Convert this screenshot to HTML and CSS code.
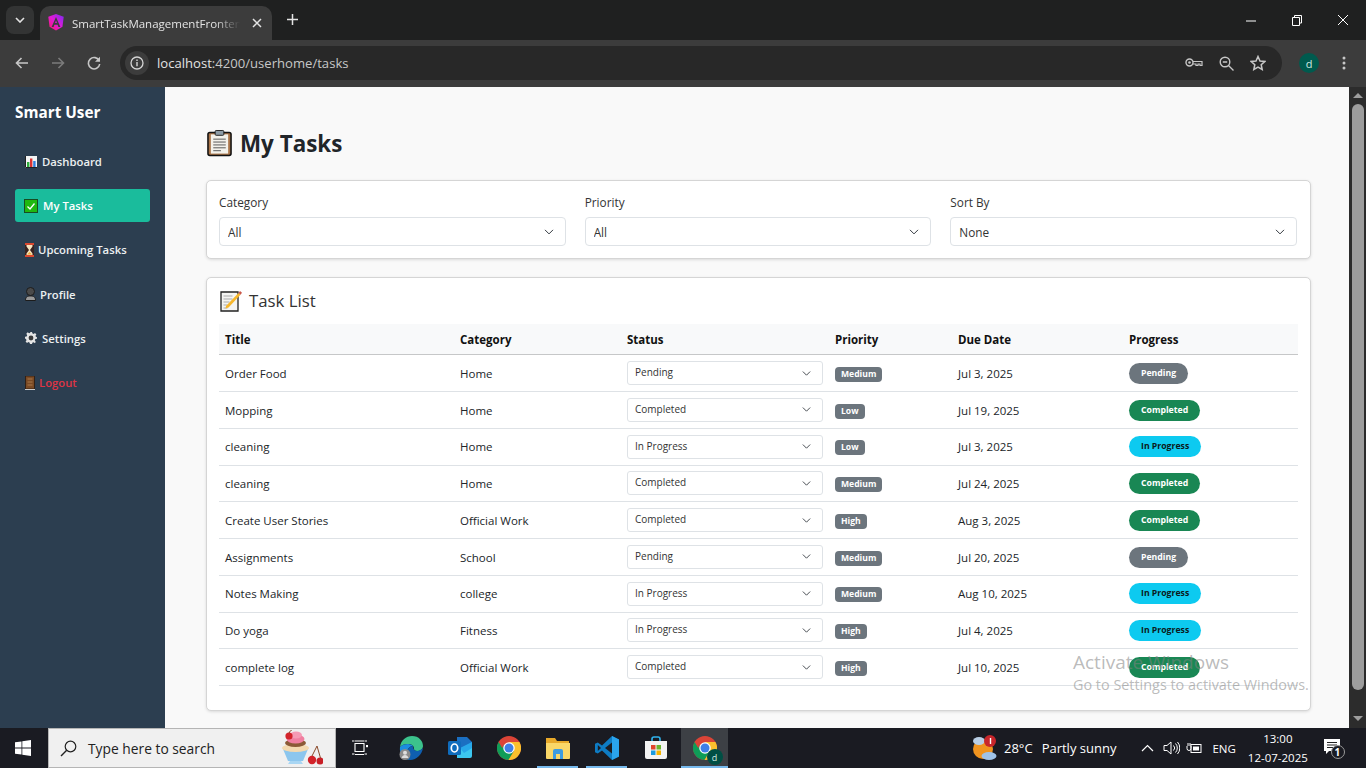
FILE: index.html
```html
<!DOCTYPE html>
<html lang="en">
<head>
<meta charset="utf-8">
<title>SmartTaskManagementFrontend</title>
<link rel="stylesheet" href="styles.css">
</head>
<body>
<svg class="defs" width="0" height="0" aria-hidden="true">
  <defs>
    <linearGradient id="ng" x1="0" y1="1" x2="1" y2="0">
      <stop offset="0" stop-color="#ff1a5e"/><stop offset=".5" stop-color="#e01ad8"/><stop offset="1" stop-color="#7a2cf0"/>
    </linearGradient>
  </defs>
  <symbol id="chrome" viewBox="0 0 48 48">
    <circle cx="24" cy="24" r="24" fill="#db4437"/>
    <path d="M24 24 3.2 36A24 24 0 0 1 3.2 12L14 30z" fill="#0f9d58"/>
    <path d="M3.2 36 14 18l10 6 10 6-11 18A24 24 0 0 1 3.2 36z" fill="#0f9d58"/>
    <path d="M24 12h20.8A24 24 0 0 1 23 48l11-18z" fill="#fbc02d"/>
    <circle cx="24" cy="24" r="11.5" fill="#fff"/>
    <circle cx="24" cy="24" r="9" fill="#3f7fe8"/>
  </symbol>
</svg>

<header class="tabstrip">
  <button class="tab-menu" aria-label="Search tabs">
    <svg width="10" height="6" viewBox="0 0 10 6"><path d="M1 1l4 4 4-4" fill="none" stroke="#e3e3e3" stroke-width="1.6"/></svg>
  </button>
  <div class="tab">
    <svg class="favicon" width="16" height="17" viewBox="0 0 16 17">
      <path d="M8 0 15.700 2.800l-1.200 10L8 16.600 1.500 12.800.3 2.800z" fill="url(#ng)"/>
      <path d="M8 3 3.600 13h2l.8-2.200h3.200l.8 2.200h2zm-1 6L8 6.400 9 9z" fill="#3c3c3c"/>
    </svg>
    <span class="tab-title">SmartTaskManagementFrontend</span>
    <svg class="tab-close" width="10" height="10" viewBox="0 0 10 10"><path d="M1 1l8 8M9 1 1 9" stroke="#e3e3e3" stroke-width="1.5"/></svg>
  </div>
  <svg class="new-tab" width="13" height="13" viewBox="0 0 13 13"><path d="M6.500 1v11M1 6.500h11" stroke="#e3e3e3" stroke-width="1.5"/></svg>
  <div class="win-controls">
    <svg width="46" height="12" viewBox="0 0 46 12"><path d="M18 7h10" stroke="#fff" stroke-width="1"/></svg>
    <svg width="46" height="12" viewBox="0 0 46 12"><path d="M18.500 3.500h7v8h-7zM20.500 3.500v-2h7v7.500h-2" fill="none" stroke="#fff"/></svg>
    <svg width="46" height="12" viewBox="0 0 46 12"><path d="M18 1l10 10M28 1 18 11" stroke="#fff"/></svg>
  </div>
</header>

<nav class="toolbar">
  <svg class="tool" width="16" height="16" viewBox="0 0 16 16"><path d="M14 8H3M7.500 3 2.500 8l5 5" fill="none" stroke="#c7c7c7" stroke-width="1.600"/></svg>
  <svg class="tool" width="16" height="16" viewBox="0 0 16 16"><path d="M2 8h11M8.500 3l5 5-5 5" fill="none" stroke="#7b7b7b" stroke-width="1.600"/></svg>
  <svg class="tool tool-last" width="16" height="16" viewBox="0 0 16 16"><path d="M13.300 6A5.700 5.700 0 1 0 13.700 9" fill="none" stroke="#c7c7c7" stroke-width="1.600"/><path d="M14 1.800v5H9z" fill="#c7c7c7"/></svg>
  <div class="omnibox">
    <span class="site-info">
      <svg width="14" height="14" viewBox="0 0 14 14"><circle cx="7" cy="7" r="6" fill="none" stroke="#d5d5d5" stroke-width="1.300"/><path d="M7 6v4.200M7 3.500v1.400" stroke="#d5d5d5" stroke-width="1.400"/></svg>
    </span>
    <span class="url"><span class="url-host">localhost</span>:4200/userhome/tasks</span>
    <span class="omni-icons">
      <svg width="18" height="10" viewBox="0 0 18 10"><circle cx="4.500" cy="4.500" r="3.500" fill="none" stroke="#c7c7c7" stroke-width="1.400"/><circle cx="4.500" cy="4.500" r="1.300" fill="#c7c7c7"/><path d="M8 3.500h9v4h-2v-1.500h-2v1.500h-2v-1.500h-3" fill="none" stroke="#c7c7c7" stroke-width="1.200"/></svg>
      <svg width="15" height="15" viewBox="0 0 15 15"><circle cx="6" cy="6" r="4.800" fill="none" stroke="#c7c7c7" stroke-width="1.400"/><path d="M3.800 6h4.400M9.500 9.500l5 5" stroke="#c7c7c7" stroke-width="1.400"/></svg>
      <svg width="16" height="16" viewBox="0 0 16 16"><path d="M8 1.500l2 4.500 4.800.5-3.600 3.200 1 4.800L8 12.100l-4.200 2.400 1-4.800L1.200 6.500 6 6z" fill="none" stroke="#c7c7c7" stroke-width="1.500"/></svg>
    </span>
  </div>
  <span class="avatar">d</span>
  <svg class="kebab" width="4" height="14" viewBox="0 0 4 14"><circle cx="2" cy="2" r="1.500" fill="#c7c7c7"/><circle cx="2" cy="7" r="1.500" fill="#c7c7c7"/><circle cx="2" cy="12" r="1.500" fill="#c7c7c7"/></svg>
</nav>

<div class="viewport">
  <aside class="sidebar">
    <h2 class="brand">Smart User</h2>
    <ul class="menu">
      <li><a class="menu-link" href="#">
        <svg class="emo" width="12" height="12" viewBox="0 0 12 12"><rect width="12" height="12" fill="#f4f4f4"/><path d="M.5 0v11.500H12" fill="none" stroke="#222"/><rect x="2" y="6" width="2.400" height="5" fill="#2fae3c"/><rect x="5" y="2.500" width="2.400" height="8.500" fill="#d33"/><rect x="8.200" y="5" width="2.400" height="6" fill="#2f7fe0"/></svg>
        Dashboard</a></li>
      <li><a class="menu-link active" href="#">
        <svg class="emo emo-check" width="14" height="14" viewBox="0 0 14 14"><rect x=".5" y=".5" width="13" height="13" fill="#1fb80f" stroke="#174d22"/><path d="M3.500 7.500l2.500 2.500 4.500-5.500" fill="none" stroke="#fff" stroke-width="1.300"/></svg>
        My Tasks</a></li>
      <li><a class="menu-link" href="#">
        <svg class="emo emo-hour" width="9" height="14" viewBox="0 0 9 14"><rect width="9" height="14" fill="#3a2320"/><rect width="9" height="2" fill="#d9482f"/><rect y="12" width="9" height="2" fill="#d9482f"/><path d="M1.500 2h6v1.500L5 7l2.500 3.500V12h-6v-1.500L4 7 1.500 3.500z" fill="#f5e4c0"/><path d="M2 11.500h5L4.500 9z" fill="#efab3b"/></svg>
        Upcoming Tasks</a></li>
      <li><a class="menu-link" href="#">
        <svg class="emo emo-person" width="11" height="14" viewBox="0 0 11 14"><circle cx="5.500" cy="4.500" r="4" fill="#4a4a4a" stroke="#1c1c1c"/><path d="M.5 13.500c0-4 2-4.500 5-4.500s5 .5 5 4.500z" fill="#9a9a9a" stroke="#1c1c1c"/></svg>
        Profile</a></li>
      <li><a class="menu-link" href="#">
        <svg class="emo" width="12" height="12" viewBox="0 0 12 12"><path d="M5 0h2l.3 1.600 1.300.6L10 1.300l1.400 1.400-.9 1.400.6 1.300L12 5v2l-1.600.3-.6 1.300.9 1.400L10 11.400l-1.400-.9-1.300.6L7 12.500H5l-.3-1.600-1.300-.6-1.400.9L.6 9.800l.9-1.400-.6-1.300L0 7V5l1.600-.3.6-1.300-.9-1.400L2.700.6l1.400.9 1.300-.6z" transform="translate(0 -.25)" fill="#e4e4e4"/><circle cx="6" cy="6" r="2.400" fill="#3a3a3a"/></svg>
        Settings</a></li>
      <li><a class="menu-link logout" href="#">
        <svg class="emo emo-door" width="10" height="14" viewBox="0 0 10 14"><rect x=".5" width="9" height="13" fill="#7a4a25" stroke="#2a1a10" stroke-width=".8"/><path d="M2.500 3h5M2.500 6h5M2.500 9h5" stroke="#a9784a"/><rect y="13" width="10" height="1" fill="#ccc"/></svg>
        Logout</a></li>
    </ul>
  </aside>

  <main class="content">
    <h1 class="page-title">
      <svg class="title-icon" width="25" height="28" viewBox="0 0 26 28"><rect x="1" y="3" width="24" height="24" rx="2" fill="#a9754a" stroke="#111" stroke-width="1.600"/><rect x="4" y="5" width="18" height="20" fill="#f3f1ea"/><rect x="8.500" y="1" width="9" height="5" rx="1" fill="#8d9ca6" stroke="#222"/><path d="M6.500 10h13M6.500 13h13M6.500 16h13M6.500 19h13M6.500 22h8" stroke="#555" stroke-width="1"/></svg>
      My Tasks
    </h1>

    <section class="card filters">
      <label class="field"><span class="field-label">Category</span>
        <select class="select"><option>All</option></select></label>
      <label class="field"><span class="field-label">Priority</span>
        <select class="select"><option>All</option></select></label>
      <label class="field"><span class="field-label">Sort By</span>
        <select class="select"><option>None</option></select></label>
    </section>

    <section class="card tasks">
      <h2 class="card-title">
        <svg class="card-icon" width="22" height="22" viewBox="0 0 22 22"><path d="M1 2h13l4 0v19H1z" fill="#f4f4f2" stroke="#222" stroke-width="1.300"/><path d="M3.500 6h9M3.500 9h9M3.500 12h6M3.500 15h4M3.500 18h4" stroke="#aaa"/><path d="M6 16 18.500 3l2 1.800L8.500 17.500 5.500 18.500z" fill="#f7b72c"/><path d="M18.500 3l1.500-2 2 1.800-1.500 2z" fill="#c9574a"/></svg>
        Task List
      </h2>
      <table class="task-table">
        <colgroup>
          <col class="c-title"><col class="c-cat"><col class="c-status"><col class="c-prio"><col class="c-due"><col class="c-prog">
        </colgroup>
        <thead>
          <tr><th>Title</th><th>Category</th><th>Status</th><th>Priority</th><th>Due Date</th><th>Progress</th></tr>
        </thead>
        <tbody>
          <tr><td>Order Food</td><td>Home</td><td><select class="select select-sm"><option>Pending</option></select></td><td><span class="badge">Medium</span></td><td>Jul 3, 2025</td><td><span class="pill pending">Pending</span></td></tr>
          <tr><td>Mopping</td><td>Home</td><td><select class="select select-sm"><option>Completed</option></select></td><td><span class="badge">Low</span></td><td>Jul 19, 2025</td><td><span class="pill done">Completed</span></td></tr>
          <tr><td>cleaning</td><td>Home</td><td><select class="select select-sm"><option>In Progress</option></select></td><td><span class="badge">Low</span></td><td>Jul 3, 2025</td><td><span class="pill doing">In Progress</span></td></tr>
          <tr><td>cleaning</td><td>Home</td><td><select class="select select-sm"><option>Completed</option></select></td><td><span class="badge">Medium</span></td><td>Jul 24, 2025</td><td><span class="pill done">Completed</span></td></tr>
          <tr><td>Create User Stories</td><td>Official Work</td><td><select class="select select-sm"><option>Completed</option></select></td><td><span class="badge">High</span></td><td>Aug 3, 2025</td><td><span class="pill done">Completed</span></td></tr>
          <tr><td>Assignments</td><td>School</td><td><select class="select select-sm"><option>Pending</option></select></td><td><span class="badge">Medium</span></td><td>Jul 20, 2025</td><td><span class="pill pending">Pending</span></td></tr>
          <tr><td>Notes Making</td><td>college</td><td><select class="select select-sm"><option>In Progress</option></select></td><td><span class="badge">Medium</span></td><td>Aug 10, 2025</td><td><span class="pill doing">In Progress</span></td></tr>
          <tr><td>Do yoga</td><td>Fitness</td><td><select class="select select-sm"><option>In Progress</option></select></td><td><span class="badge">High</span></td><td>Jul 4, 2025</td><td><span class="pill doing">In Progress</span></td></tr>
          <tr><td>complete log</td><td>Official Work</td><td><select class="select select-sm"><option>Completed</option></select></td><td><span class="badge">High</span></td><td>Jul 10, 2025</td><td><span class="pill done">Completed</span></td></tr>
        </tbody>
      </table>
    </section>
  </main>

  <div class="scrollbar">
    <span class="arrow-up"></span>
    <span class="thumb"></span>
    <span class="arrow-down"></span>
  </div>

  <div class="activate">
    <div class="activate-1">Activate Windows</div>
    <div class="activate-2">Go to Settings to activate Windows.</div>
  </div>
</div>

<footer class="taskbar">
  <span class="start">
    <svg width="16" height="16" viewBox="0 0 16 16"><path d="M0 2.300 6.500 1.400v6.200H0zM7.300 1.300 16 0v7.600H7.300zM0 8.400h6.500v6.200L0 13.700zM7.300 8.400H16V16l-8.700-1.300z" fill="#fff"/></svg>
  </span>
  <div class="search">
    <svg width="17" height="17" viewBox="0 0 17 17"><circle cx="10.500" cy="6.500" r="5.300" fill="none" stroke="#222" stroke-width="1.200"/><path d="M6.700 10.300 1 16" stroke="#222" stroke-width="1.400"/></svg>
    <span class="search-text">Type here to search</span>
    <svg class="cupcake" width="44" height="36" viewBox="0 0 44 36">
      <path d="M4 19h25l-5 12H9z" fill="#8cc6ee"/><path d="M11 31h11l2 3H9z" fill="#a9d6f3"/>
      <ellipse cx="16.500" cy="18" rx="13.500" ry="4" fill="#f3d9b0"/><ellipse cx="16.500" cy="13" rx="10.500" ry="4" fill="#8b5a36"/><ellipse cx="16.500" cy="9" rx="9" ry="4.500" fill="#f07fa0"/><ellipse cx="17" cy="5" rx="6" ry="3.500" fill="#f59ab4"/>
      <circle cx="10" cy="6" r="3.600" fill="#d2232a"/><path d="M10 3C11 1 12 0 13 0" stroke="#7c3a1c" fill="none"/>
      <circle cx="33" cy="30" r="4.200" fill="#d2232a"/><circle cx="41" cy="31" r="3.500" fill="#c81e26"/><path d="M33 26 38 16l3.500 12" stroke="#8a4a2a" fill="none"/>
    </svg>
  </div>
  <div class="apps">
    <span class="app app-view">
      <svg width="16" height="16" viewBox="0 0 16 16"><path d="M3 3.500h9v8H3zM0 1h2.500M0 14h2.500M12.500 1H15M12.500 14H15M3 1h9M3 14.500h9" fill="none" stroke="#fff" stroke-width="1.100"/><rect x="14" y="5" width="2.200" height="2.200" fill="#fff"/></svg>
    </span>
    <span class="app">
      <svg width="24" height="24" viewBox="0 0 24 24"><path d="M1 11C2 4 7 0 13 0c7 0 11 5 11 10 0 3-3 5-6 5-2 0-3-1-3-2 0-3-2-5-6-5-4 0-6 1-8 3z" fill="#3cc28c"/><path d="M1 11c2-2 4-3 8-3 2 0 4 .7 5 2-3 0-6 3-6 7 0 3 1 5 3 7C5 23 0 18 1 11z" fill="#1b8de0"/><path d="M8 17c0-4 3-7 6-7 0 2 1 5 4 5 2 0 4-1 6-3-1 6-6 12-13 12-2-2-3-4-3-7z" fill="#0f5fb0"/><circle cx="6" cy="18.500" r="5.500" fill="#8a8a8a"/><circle cx="6" cy="16.800" r="2" fill="#ddd"/><path d="M2.500 22c.5-2 2-3 3.500-3s3 1 3.500 3z" fill="#ddd"/></svg>
    </span>
    <span class="app">
      <svg width="24" height="24" viewBox="0 0 24 24"><path d="M9 1h10l5 5v6H9z" fill="#1b6fc2"/><path d="M9 12h15v8a2 2 0 0 1-2 2H9z" fill="#3cc7f0"/><path d="M12 12l12-6v6l-8 5z" fill="#28a8ea"/><rect y="5" width="13" height="14" rx="1.500" fill="#0f6cbd"/><ellipse cx="6.500" cy="12" rx="3.200" ry="4" fill="none" stroke="#fff" stroke-width="1.700"/></svg>
    </span>
    <span class="app"><svg width="24" height="24"><use href="#chrome"/></svg></span>
    <span class="app running">
      <svg width="24" height="22" viewBox="0 0 24 22"><path d="M0 1h9l2 3h12v2H0z" fill="#e8a92a"/><path d="M0 6h24v15a1 1 0 0 1-1 1H1a1 1 0 0 1-1-1z" fill="#fad768"/><path d="M7 22v-8a2 2 0 0 1 2-2h6a2 2 0 0 1 2 2v8h-3v-5h-4v5z" fill="#3d9be0"/></svg>
    </span>
    <span class="app running">
      <svg width="24" height="24" viewBox="0 0 24 24"><path d="M17 0 24 3.400v17.200L17 24 7 14.400 2.800 17.600 0 16.200V7.800l2.800-1.400L7 9.600z" fill="#0e7cc4"/><path d="M17 0 24 3.400v17.200L17 24z" fill="#2aa4ee"/><path d="M17 6.500 10 12l7 5.500z" fill="#1b1c22"/><path d="M2.800 9 6 12l-3.200 3z" fill="#1b1c22"/></svg>
    </span>
    <span class="app">
      <svg width="24" height="24" viewBox="0 0 24 24"><path d="M8 5V3a2 2 0 0 1 2-2h4a2 2 0 0 1 2 2v2" fill="none" stroke="#2fb3ee" stroke-width="1.600"/><path d="M1 5h22v16a2 2 0 0 1-2 2H3a2 2 0 0 1-2-2z" fill="#f3f3f3"/><rect x="7" y="9" width="4.500" height="4.500" fill="#e0452c"/><rect x="12.500" y="9" width="4.500" height="4.500" fill="#6cb52d"/><rect x="7" y="14.500" width="4.500" height="4.500" fill="#1a9be0"/><rect x="12.500" y="14.500" width="4.500" height="4.500" fill="#f4b400"/></svg>
    </span>
    <span class="app current">
      <span class="chrome-wrap">
        <svg width="24" height="24"><use href="#chrome"/></svg>
        <span class="mini-avatar">d</span>
      </span>
    </span>
  </div>
  <div class="tray">
    <svg class="weather" width="26" height="26" viewBox="0 0 26 26"><circle cx="11" cy="14" r="10" fill="#f0941f"/><ellipse cx="7" cy="6" rx="6" ry="4" fill="#b9cfe6"/><ellipse cx="17" cy="21" rx="7.500" ry="4" fill="#9fc3e8"/><circle cx="18" cy="6" r="6" fill="#c8262b"/><path d="M18.500 3v6" stroke="#fff" stroke-width="1.400"/></svg>
    <span class="temp">28°C</span>
    <span class="forecast">Partly sunny</span>
    <svg class="tray-chevron" width="13" height="8" viewBox="0 0 13 8"><path d="M1 7l5.500-5.500L12 7" fill="none" stroke="#fff" stroke-width="1.200"/></svg>
    <svg class="tray-sound" width="17" height="14" viewBox="0 0 17 14"><path d="M1 4.500h3L8 1v12L4 9.500H1z" fill="none" stroke="#fff"/><path d="M10.500 4.500a3.500 3.500 0 0 1 0 5M12.500 2.500a6.500 6.500 0 0 1 0 9M14.500 1a9 9 0 0 1 0 12" fill="none" stroke="#fff"/></svg>
    <svg class="tray-batt" width="16" height="11" viewBox="0 0 16 11"><rect x="5" y="1.500" width="10" height="8" fill="none" stroke="#fff"/><rect x="7" y="3.500" width="6" height="4" fill="#fff"/><path d="M1 3v2.500a2 2 0 0 0 4 0V3M2 0v3M4 0v3" fill="none" stroke="#fff"/></svg>
    <span class="lang">ENG</span>
    <span class="clock"><span>13:00</span><span>12-07-2025</span></span>
    <span class="notif">
      <svg width="24" height="24" viewBox="0 0 24 24"><path d="M2 3h16v12H7l-3 3v-3H2z" fill="#fff"/><path d="M5 6.500h10M5 9h10M5 11.500h6" stroke="#222"/><circle cx="16" cy="16" r="6.500" fill="#1a1b22" stroke="#9a9a9a"/></svg>
      <span class="notif-count">1</span>
    </span>
  </div>
</footer>
</body>
</html>
```

FILE: styles.css
```css
* { box-sizing: border-box; }
html, body { margin: 0; height: 100%; }
body {
  width: 1366px;
  height: 768px;
  overflow: hidden;
  display: flex;
  flex-direction: column;
  font-family: "Open Sans", "Noto Sans", sans-serif;
  background: #1f2020;
  color: #212529;
}
.defs { position: absolute; }

/* Browser chrome */
.tabstrip {
  height: 40px;
  flex: none;
  display: flex;
  align-items: flex-end;
  background: #1f2020;
  padding-left: 6px;
}
.tab-menu {
  width: 28px;
  height: 28px;
  margin: 0 6px 6px 0;
  border: 0;
  padding: 0;
  border-radius: 8px;
  background: #333434;
  display: flex;
  align-items: center;
  justify-content: center;
}
.tab {
  width: 232px;
  height: 34px;
  background: #3c3c3c;
  border-radius: 10px 10px 0 0;
  display: flex;
  align-items: center;
  padding: 0 10px 0 8px;
  color: #e3e3e3;
  font-size: 11.500px;
}
.favicon { flex: none; margin-right: 8px; margin-top: -1px; }
.tab-title {
  flex: 1;
  white-space: nowrap;
  overflow: hidden;
  -webkit-mask-image: linear-gradient(90deg, #000 85%, transparent);
  mask-image: linear-gradient(90deg, #000 85%, transparent);
}
.tab-close { flex: none; margin-left: 12px; }
.new-tab { margin: 0 0 14px 14px; }
.win-controls {
  margin-left: auto;
  height: 40px;
  display: flex;
  align-items: center;
  gap: 0;
}
.toolbar {
  height: 47px;
  flex: none;
  background: #3c3c3c;
  display: flex;
  align-items: center;
  padding: 0 0 1px 14px;
}
.tool { margin-right: 20px; flex: none; }
.tool-last { margin-right: 18px; }
.omnibox {
  width: 1162px;
  height: 34px;
  background: #282828;
  border-radius: 17px;
  display: flex;
  align-items: center;
  padding: 0 16px 0 5px;
}
.site-info {
  width: 24px;
  height: 24px;
  border-radius: 50%;
  background: #3c3c3c;
  display: flex;
  align-items: center;
  justify-content: center;
}
.url { margin-left: 8px; font-size: 13.100px; color: #c7c7c7; }
.url-host { color: #e3e3e3; }
.omni-icons { margin-left: auto; display: flex; align-items: center; gap: 16px; }
.avatar {
  width: 20px;
  height: 20px;
  margin-left: 17px;
  border-radius: 50%;
  background: #005a4e;
  color: #cfe9e2;
  font-size: 11px;
  display: flex;
  align-items: center;
  justify-content: center;
}
.kebab { margin-left: 23px; }

/* Page */
.viewport {
  position: relative;
  flex: 1;
  display: flex;
  min-height: 0;
  background: #f9f9f9;
}
.sidebar {
  width: 165px;
  flex: none;
  background: #2c3e50;
  padding: 14px 15px;
  color: #fff;
}
.brand { margin: 0 0 22px; font-size: 15.300px; line-height: 22px; font-weight: 700; }
.menu { list-style: none; margin: 0; padding: 0; display: flex; flex-direction: column; gap: 11px; }
.menu-link {
  height: 33.200px;
  padding-left: 10px;
  display: flex;
  align-items: center;
  gap: 5px;
  border-radius: 3px;
  color: #ecf0f1;
  text-decoration: none;
  font-size: 11.300px;
  font-weight: 600;
}
.menu-link.active { background: #1abc9c; color: #fff; }
.menu-link.logout { color: #dc3545; }
.emo { flex: none; }
.emo-check { margin-left: -1px; }
.emo-hour { margin-right: -1px; }
.emo-person { margin-right: -1px; }
.emo-door { margin-right: -1px; }
.content {
  flex: 1;
  min-width: 0;
  padding: 40px 38px 0 41px;
}
.page-title {
  margin: 0 0 21px;
  height: 32px;
  display: flex;
  align-items: center;
  gap: 8px;
  font-size: 22.400px;
  font-weight: 700;
}
.title-icon { margin-left: 1px; }
.card {
  background: #fff;
  border: 1px solid #d5d5d5;
  border-radius: 5px;
  box-shadow: 0 1px 3px rgba(0, 0, 0, .12);
}
.filters {
  height: 79px;
  margin-bottom: 18px;
  padding: 12px;
  display: grid;
  grid-template-columns: repeat(3, 346.670px);
  gap: 19px;
}
.field { display: flex; flex-direction: column; gap: 6px; }
.field-label { font-size: 11.800px; line-height: 18px; color: #333; }
.select {
  appearance: none;
  -webkit-appearance: none;
  width: 100%;
  height: 29px;
  border: 1px solid #dee2e6;
  border-radius: 4px;
  padding: 0 30px 0 8px;
  background: #fff url("data:image/svg+xml,%3Csvg xmlns='http://www.w3.org/2000/svg' viewBox='0 0 16 16'%3E%3Cpath fill='none' stroke='%23343a40' stroke-linecap='round' stroke-linejoin='round' stroke-width='1.600' d='m2 5 6 6 6-6'/%3E%3C/svg%3E") no-repeat right 11px center / 10px 10px;
  font-family: inherit;
  font-size: 11.800px;
  color: #333;
}
.tasks { height: 434px; padding: 10px 12px; }
.card-title {
  margin: 0 0 11px;
  height: 25px;
  display: flex;
  align-items: center;
  gap: 7px;
  font-size: 16.800px;
  font-weight: 500;
  color: #333;
}
.card-icon { margin-left: 1px; }
.task-table { width: 1079px; table-layout: fixed; border-collapse: collapse; }
.c-title { width: 235px; }
.c-cat { width: 167px; }
.c-status { width: 208px; }
.c-prio { width: 123px; }
.c-due { width: 171px; }
.task-table th {
  height: 30.900px;
  padding: 0 6px;
  background: #f8f9fa;
  border-bottom: 1px solid #c6c7c8;
  text-align: left;
  font-size: 11.500px;
  font-weight: 700;
  color: #111;
}
.task-table td {
  height: 36.750px;
  padding: 0 6px;
  border-bottom: 1px solid #dee2e6;
  font-size: 11.500px;
  color: #212529;
  vertical-align: middle;
}
.select-sm {
  display: block;
  height: 24px;
  margin-bottom: .5px;
  padding: 0 26px 2px 7px;
  font-size: 10px;
  border-radius: 3px;
  background-position: right 11px center;
  background-size: 9px 9px;
}
.badge {
  display: inline-block;
  margin-top: 2px;
  padding: 0 6px;
  height: 15px;
  line-height: 15px;
  vertical-align: middle;
  border-radius: 4px;
  background: #6c757d;
  color: #fff;
  font-size: 8.600px;
  font-weight: 700;
}
.pill {
  display: inline-block;
  height: 21px;
  line-height: 21px;
  padding: 0 12px;
  vertical-align: middle;
  border-radius: 11px;
  color: #fff;
  font-size: 8.700px;
  font-weight: 700;
}
.pending { background: #6c757d; }
.done { background: #198754; }
.doing { background: #0dcaf0; color: #0b1a20; }

/* Scrollbar */
.scrollbar {
  width: 17px;
  flex: none;
  background: #2c2c2c;
  display: flex;
  flex-direction: column;
  align-items: center;
  padding: 6px 0 7px;
}
.arrow-up, .arrow-down { width: 0; height: 0; border-left: 5px solid transparent; border-right: 5px solid transparent; }
.arrow-up { border-bottom: 5px solid #9d9d9d; }
.arrow-down { border-top: 5px solid #9d9d9d; }
.thumb { width: 12px; flex: 1; margin: 6px 0 26px; border-radius: 6px; background: #9d9d9d; }
.activate {
  position: absolute;
  left: 1073px;
  top: 563px;
  color: rgba(130, 130, 130, .55);
  white-space: nowrap;
  pointer-events: none;
}
.activate-1 { font-size: 19px; line-height: 24px; }
.activate-2 { font-size: 14.400px; line-height: 22px; }

/* Taskbar */
.taskbar {
  height: 40px;
  flex: none;
  display: flex;
  align-items: center;
  background: #1a1b22;
  color: #fff;
}
.start { width: 48px; display: flex; justify-content: center; padding-right: 2px; }
.search {
  width: 288px;
  height: 40px;
  background: #f0f0f0;
  border: 1px solid #b5b5b5;
  display: flex;
  align-items: center;
  padding-left: 11px;
  color: #222;
}
.search-text { margin-left: 11px; font-size: 13.800px; }
.cupcake { margin-left: auto; margin-right: 12px; }
.apps { display: flex; height: 40px; }
.app {
  width: 49px;
  height: 40px;
  display: flex;
  align-items: center;
  justify-content: center;
  position: relative;
}
.app-view { width: 50px; padding-right: 2px; }
.app.running::after, .app.current::after {
  content: "";
  position: absolute;
  left: 4px;
  right: 4px;
  bottom: 0;
  height: 2px;
  background: #76b9ed;
}
.app.current { width: 47px; margin-left: 1px; background: #3d4045; }
.app.current::after { left: 0; right: 0; }
.chrome-wrap { position: relative; display: flex; }
.mini-avatar {
  position: absolute;
  right: -6px;
  bottom: -5px;
  width: 16px;
  height: 16px;
  border-radius: 50%;
  background: #004f44;
  color: #cfe9e2;
  font-size: 9px;
  display: flex;
  align-items: center;
  justify-content: center;
}
.tray { flex: 1; display: flex; align-items: center; padding-left: 244px; font-size: 13px; }
.temp { margin-left: 6px; }
.forecast { margin-left: 9px; }
.tray-chevron { margin-left: 25px; }
.tray-sound { margin-left: 9px; }
.tray-batt { margin-left: 6px; }
.lang { margin-left: 10px; font-size: 11.500px; }
.clock {
  margin-left: 12px;
  display: flex;
  flex-direction: column;
  align-items: center;
  font-size: 11.500px;
  line-height: 19px;
}
.notif { position: relative; margin-left: 14px; display: flex; }
.notif-count { position: absolute; right: 2px; bottom: 1px; width: 13px; text-align: center; font-size: 10px; font-weight: 700; }
```
